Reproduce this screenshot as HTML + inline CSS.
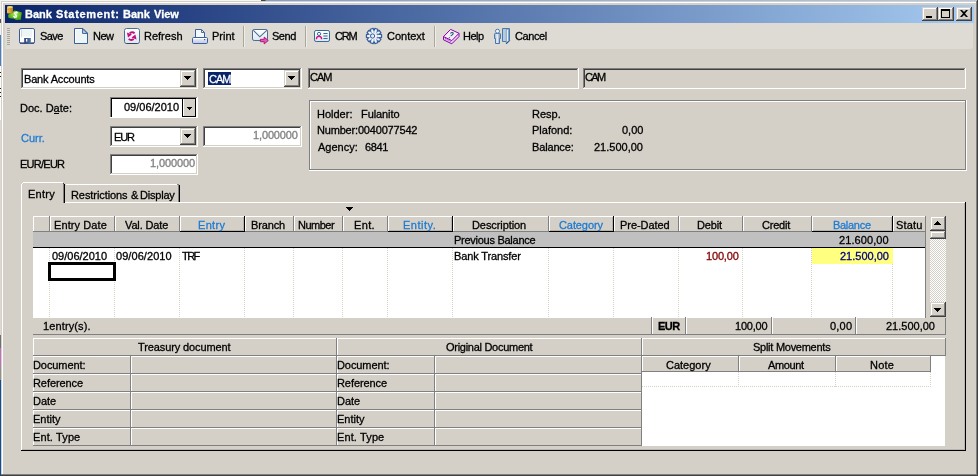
<!DOCTYPE html>
<html><head><meta charset="utf-8"><title>Bank Statement: Bank View</title>
<style>
html,body{margin:0;padding:0}
body{width:978px;height:476px;overflow:hidden;background:#D4D0C8;position:relative;font-family:"Liberation Sans",sans-serif;font-size:11px}
body>div,body>svg,body>span{position:absolute}
.t{white-space:nowrap;line-height:13px;height:13px;font-size:11px;will-change:transform;-webkit-text-stroke:0.3px currentColor}
</style></head>
<body>
<div style="left:0px;top:0px;width:978px;height:1px;background:linear-gradient(90deg,#F6F6F6 0,#F6F6F6 261px,#444 261px,#444 265px,#7FA0D2 266px,#B4C8E2 978px)"></div>
<div style="left:0px;top:0px;width:1px;height:476px;background:#DDD9D2"></div>
<div style="left:0px;top:0px;width:1px;height:19px;background:#F2F2F2"></div>
<div style="left:0px;top:19px;width:1px;height:4px;background:#555"></div>
<div style="left:0px;top:23px;width:1px;height:12px;background:#F0F0F0"></div>
<div style="left:0px;top:35px;width:1px;height:31px;background:#3F7FD0"></div>
<div style="left:0px;top:66px;width:1px;height:54px;background:#FBFBFB"></div>
<div style="left:0px;top:335px;width:1px;height:13px;background:#707070"></div>
<div style="left:0px;top:348px;width:1px;height:18px;background:#C070C0"></div>
<div style="left:0px;top:366px;width:1px;height:14px;background:#909090"></div>
<div style="left:0px;top:380px;width:1px;height:96px;background:#0A4FA0"></div>
<div style="left:0px;top:72px;width:1px;height:1px;background:#222"></div>
<div style="left:0px;top:76px;width:1px;height:1px;background:#222"></div>
<div style="left:0px;top:88px;width:1px;height:1px;background:#222"></div>
<div style="left:0px;top:92px;width:1px;height:1px;background:#222"></div>
<div style="left:0px;top:96px;width:1px;height:1px;background:#222"></div>
<div style="left:1px;top:1px;width:977px;height:1px;background:#D4D0C8"></div>
<div style="left:1px;top:1px;width:1px;height:475px;background:#D4D0C8"></div>
<div style="left:2px;top:2px;width:975px;height:1px;background:#FFFFFF"></div>
<div style="left:2px;top:2px;width:1px;height:473px;background:#FFFFFF"></div>
<div style="left:976px;top:1px;width:1px;height:475px;background:#808080"></div>
<div style="left:977px;top:0px;width:1px;height:476px;background:#404040"></div>
<div style="left:1px;top:474px;width:977px;height:1px;background:#808080"></div>
<div style="left:0px;top:475px;width:978px;height:1px;background:#404040"></div>
<div style="left:977px;top:474px;width:1px;height:2px;background:#404040"></div>
<div style="left:5px;top:5px;width:969px;height:18px;background:linear-gradient(90deg,#0A246A 0%,#A6CAF0 100%)"></div>
<span class="t" id="t0" style="left:25.12px;top:8px;color:#FFF;letter-spacing:0.000px;font-weight:bold;">Bank</span>
<span class="t" id="t1" style="left:56.00px;top:8px;color:#FFF;letter-spacing:0.676px;font-weight:bold;">Statement:</span>
<span class="t" id="t2" style="left:122.58px;top:8px;color:#FFF;letter-spacing:0.000px;font-weight:bold;">Bank</span>
<span class="t" id="t3" style="left:153.58px;top:8px;color:#FFF;letter-spacing:0.000px;font-weight:bold;">View</span>
<div style="left:922px;top:7px;width:16px;height:14px;background:#D4D0C8"></div>
<div style="left:922px;top:7px;width:15px;height:1px;background:#D4D0C8"></div>
<div style="left:922px;top:7px;width:1px;height:13px;background:#D4D0C8"></div>
<div style="left:923px;top:8px;width:13px;height:1px;background:#FFFFFF"></div>
<div style="left:923px;top:8px;width:1px;height:11px;background:#FFFFFF"></div>
<div style="left:923px;top:19px;width:14px;height:1px;background:#808080"></div>
<div style="left:936px;top:8px;width:1px;height:12px;background:#808080"></div>
<div style="left:922px;top:20px;width:16px;height:1px;background:#404040"></div>
<div style="left:937px;top:7px;width:1px;height:14px;background:#404040"></div>
<div style="left:938px;top:7px;width:16px;height:14px;background:#D4D0C8"></div>
<div style="left:938px;top:7px;width:15px;height:1px;background:#D4D0C8"></div>
<div style="left:938px;top:7px;width:1px;height:13px;background:#D4D0C8"></div>
<div style="left:939px;top:8px;width:13px;height:1px;background:#FFFFFF"></div>
<div style="left:939px;top:8px;width:1px;height:11px;background:#FFFFFF"></div>
<div style="left:939px;top:19px;width:14px;height:1px;background:#808080"></div>
<div style="left:952px;top:8px;width:1px;height:12px;background:#808080"></div>
<div style="left:938px;top:20px;width:16px;height:1px;background:#404040"></div>
<div style="left:953px;top:7px;width:1px;height:14px;background:#404040"></div>
<div style="left:956px;top:7px;width:16px;height:14px;background:#D4D0C8"></div>
<div style="left:956px;top:7px;width:15px;height:1px;background:#D4D0C8"></div>
<div style="left:956px;top:7px;width:1px;height:13px;background:#D4D0C8"></div>
<div style="left:957px;top:8px;width:13px;height:1px;background:#FFFFFF"></div>
<div style="left:957px;top:8px;width:1px;height:11px;background:#FFFFFF"></div>
<div style="left:957px;top:19px;width:14px;height:1px;background:#808080"></div>
<div style="left:970px;top:8px;width:1px;height:12px;background:#808080"></div>
<div style="left:956px;top:20px;width:16px;height:1px;background:#404040"></div>
<div style="left:971px;top:7px;width:1px;height:14px;background:#404040"></div>
<div style="left:926px;top:16px;width:6px;height:2px;background:#000"></div>
<div style="left:941px;top:9px;width:9px;height:9px;border:1px solid #000;border-top-width:2px;box-sizing:border-box"></div>
<svg style="left:960px;top:10px" width="8" height="7" viewBox="0 0 8 7"><path d="M0 0h2l2 2 2-2h2L5 3.5 8 7H6L4 5 2 7H0l3-3.5z" fill="#000"/></svg>
<div style="left:5px;top:23px;width:968px;height:26px;background:#DEDBD5;border-radius:0 0 3px 0"></div>
<div style="left:7px;top:28px;width:3px;height:1px;background:#A9A6A0"></div>
<div style="left:7px;top:30px;width:3px;height:1px;background:#A9A6A0"></div>
<div style="left:7px;top:32px;width:3px;height:1px;background:#A9A6A0"></div>
<div style="left:7px;top:34px;width:3px;height:1px;background:#A9A6A0"></div>
<div style="left:7px;top:36px;width:3px;height:1px;background:#A9A6A0"></div>
<div style="left:7px;top:38px;width:3px;height:1px;background:#A9A6A0"></div>
<div style="left:7px;top:40px;width:3px;height:1px;background:#A9A6A0"></div>
<div style="left:7px;top:42px;width:3px;height:1px;background:#A9A6A0"></div>
<div style="left:7px;top:44px;width:3px;height:1px;background:#A9A6A0"></div>
<span class="t" id="t4" style="left:39.58px;top:30px;color:#000;letter-spacing:-0.587px;">Save</span>
<span class="t" id="t5" style="left:93.20px;top:30px;color:#000;letter-spacing:-0.560px;">New</span>
<span class="t" id="t6" style="left:144.20px;top:30px;color:#000;letter-spacing:0.000px;">Refresh</span>
<span class="t" id="t7" style="left:212.00px;top:30px;color:#000;letter-spacing:0.000px;">Print</span>
<span class="t" id="t8" style="left:271.90px;top:30px;color:#000;letter-spacing:-0.480px;">Send</span>
<span class="t" id="t9" style="left:334.58px;top:30px;color:#000;letter-spacing:-1.240px;">CRM</span>
<span class="t" id="t10" style="left:386.58px;top:30px;color:#000;letter-spacing:0.000px;">Context</span>
<span class="t" id="t11" style="left:463.20px;top:30px;color:#000;letter-spacing:-0.533px;">Help</span>
<span class="t" id="t12" style="left:514.50px;top:30px;color:#000;letter-spacing:-0.400px;">Cancel</span>
<div style="left:243px;top:26px;width:1px;height:21px;background:#ACA899"></div>
<div style="left:244px;top:26px;width:1px;height:21px;background:#EFEDE8"></div>
<div style="left:305px;top:26px;width:1px;height:21px;background:#ACA899"></div>
<div style="left:306px;top:26px;width:1px;height:21px;background:#EFEDE8"></div>
<div style="left:434px;top:26px;width:1px;height:21px;background:#ACA899"></div>
<div style="left:435px;top:26px;width:1px;height:21px;background:#EFEDE8"></div>
<svg style="left:0;top:23px" width="978" height="26" viewBox="0 23 978 26">
<defs>
<linearGradient id="gw" x1="0" y1="0" x2="0" y2="1"><stop offset="0" stop-color="#FFFFFF"/><stop offset="1" stop-color="#DDE7EF"/></linearGradient>
<linearGradient id="gp" x1="0" y1="0" x2="0" y2="1"><stop offset="0" stop-color="#F2F4FB"/><stop offset="1" stop-color="#BFC8E3"/></linearGradient>
<linearGradient id="gs" x1="0" y1="0" x2="1" y2="0"><stop offset="0" stop-color="#2E4577"/><stop offset="1" stop-color="#5874A3"/></linearGradient>
<linearGradient id="gb" x1="0" y1="0" x2="1" y2="0"><stop offset="0" stop-color="#8FABCB"/><stop offset="0.45" stop-color="#EEF3F9"/><stop offset="1" stop-color="#6385AF"/></linearGradient>
</defs>
<!-- save -->
<rect x="19.5" y="28.5" width="15" height="15" rx="1.6" fill="#FFFFFF" stroke="#3B5A94"/>
<rect x="21.6" y="29.4" width="10.6" height="7.2" fill="#EDF5F5"/>
<rect x="21" y="29.2" width="0.8" height="8" fill="#BFD0E4"/>
<rect x="20" y="42.4" width="14" height="1.2" fill="#2F487A"/>
<rect x="24.2" y="38" width="6.6" height="5.6" fill="url(#gs)"/>
<rect x="26" y="39" width="1.3" height="2.6" fill="#F4F7FB"/>
<!-- new -->
<path d="M74.5 28.5H83L87.5 33V43.5H74.5Z" fill="#EDF5F5" stroke="#3D5F99"/>
<path d="M75.5 42.5V29.5H82.5" fill="none" stroke="#FFFFFF"/>
<path d="M82.6 28.9V33.4H87.2Z" fill="#C7D6E8" stroke="#3D5F99" stroke-linejoin="round"/>
<!-- refresh -->
<rect x="124.5" y="28.5" width="15" height="15" rx="2" fill="url(#gw)" stroke="#4A6D94"/>
<path d="M126.5 43.5H137.5" stroke="#2F4560" fill="none"/>
<path d="M134.6 33.4C133.2 31.8 130.8 31.9 129.8 33.4" fill="none" stroke="#C2107C" stroke-width="1.9"/>
<path d="M126.9 32.6L131.9 34.6L128 37.6Z" fill="#C2107C"/>
<path d="M128.8 38.8C130.2 40.4 132.6 40.3 133.6 38.8" fill="none" stroke="#C2107C" stroke-width="1.9"/>
<path d="M136.5 39.6L131.5 37.6L135.4 34.6Z" fill="#C2107C"/>
<!-- print -->
<path d="M195.5 37.5V29.5H201.5L204.5 32.5V37.5" fill="#F3F8FA" stroke="#3D5F99"/>
<path d="M201.5 29.8V32.5H204.3" fill="none" stroke="#3D5F99" stroke-width="0.9"/>
<rect x="192.5" y="37.5" width="15" height="6" rx="1.2" fill="url(#gp)" stroke="#3D5F99"/>
<path d="M193.5 38.5H206.5" stroke="#FFFFFF" fill="none"/>
<rect x="204" y="39" width="1.2" height="1.2" fill="#3D5F99"/>
<!-- send -->
<rect x="252.5" y="29.5" width="15" height="11" rx="1.6" fill="url(#gw)" stroke="#4A6D94"/>
<path d="M253.4 30.3L259.8 36.8L266.8 30.3" fill="none" stroke="#4A6D94" stroke-width="1.1"/>
<path d="M260.4 39.3H264.2V37.1L268.3 40.5L264.2 43.9V41.7H260.4Z" fill="#D860B0" stroke="#B4087A" stroke-width="0.9" stroke-linejoin="round"/>
<!-- crm -->
<rect x="314.5" y="30.5" width="15" height="11" rx="1.6" fill="url(#gw)" stroke="#366A9C"/>
<circle cx="319" cy="33.9" r="1.6" fill="#FFFFFF" stroke="#366A9C"/>
<path d="M316.4 39.2C316.4 37.2 317.4 36.4 319 36.4S321.6 37.2 321.6 39.2" fill="#FBE3F0" stroke="#D0107A" stroke-width="1.3"/>
<path d="M323.4 33.5H327.6M323.4 36H327.6M323.4 38.5H327.6" stroke="#366A9C" fill="none" stroke-width="1"/>
<!-- context gear -->
<polygon points="379.34,34.32 381.56,34.52 381.56,37.48 379.34,37.68 379.31,37.78 380.98,39.24 379.24,41.64 377.34,40.50 377.25,40.56 377.74,42.73 374.93,43.64 374.06,41.60 373.94,41.60 373.07,43.64 370.26,42.73 370.75,40.56 370.66,40.50 368.76,41.64 367.02,39.24 368.69,37.78 368.66,37.68 366.44,37.48 366.44,34.52 368.66,34.32 368.69,34.22 367.02,32.76 368.76,30.36 370.66,31.50 370.75,31.44 370.26,29.27 373.07,28.36 373.94,30.40 374.06,30.40 374.93,28.36 377.74,29.27 377.25,31.44 377.34,31.50 379.24,30.36 380.98,32.76 379.31,34.22" fill="#F2F6FB" stroke="#3A5F9A" stroke-width="1.25" stroke-linejoin="round"/>
<path d="M377.04 36.99L379.33 37.73M375.88 38.59L377.29 40.53M374.00 39.20L374.00 41.60M372.12 38.59L370.71 40.53M370.96 36.99L368.67 37.73M370.96 35.01L368.67 34.27M372.12 33.41L370.71 31.47M374.00 32.80L374.00 30.40M375.88 33.41L377.29 31.47M377.04 35.01L379.33 34.27" stroke="#86A3CC" stroke-width="0.9" fill="none"/>
<circle cx="372.6" cy="36" r="2.1" fill="#E6EEF6" stroke="#3A5F9A" stroke-width="1"/>
<path d="M376.6 34.2H380M376.6 37.8H380" stroke="#3A5F9A" stroke-width="1" fill="none"/>
<!-- help book -->
<path d="M443.5 36.6V39.8L451.8 43.8L459 36.6V33.3" fill="#E9D2F2" stroke="#8A00A8" stroke-linejoin="round"/>
<path d="M443.5 36.6L450.6 29.4L459 33.3L451.8 40.6Z" fill="#F6ECFA" stroke="#8A00A8" stroke-linejoin="round"/>
<path d="M445 38.5L451.8 42" stroke="#8A00A8" stroke-width="0.8" stroke-dasharray="1.5 1" fill="none"/>
<path d="M450.6 33.6C450.8 32.4 452.6 32 453.2 33.1C453.7 34.3 451.6 35 450.6 36.2" fill="none" stroke="#1F5F66" stroke-width="1.1"/>
<rect x="448.8" y="37.2" width="1.1" height="1.1" fill="#1F5F66"/>
<!-- cancel: person + door -->
<path d="M495.5 43.5V38.5H494.5V34.2Q494.5 33.4 495.5 33.4H499.5Q500.5 33.4 500.5 34.2V38.5H499.5V43.5Z" fill="url(#gb)" stroke="#4A78AA" stroke-linejoin="round"/>
<circle cx="497.5" cy="31.2" r="2" fill="#F4F8FC" stroke="#4A78AA"/>
<path d="M502.5 28.5H509.5V40.6L506.4 43.8V41.5H502.5Z" fill="#B7CBDE" stroke="#4A78AA" stroke-linejoin="round"/>
<path d="M506.3 29.5L508.6 29V40.5L506.3 42.8Z" fill="#E6EEF6" stroke="#5C86B4" stroke-width="0.7"/>
<path d="M509.8 40.4L506.2 44" stroke="#2F4F80" stroke-width="1" fill="none"/>
</svg>
<!-- title icon -->
<svg style="left:6px;top:5px" width="18" height="18" viewBox="6 5 18 18">
<defs>
<radialGradient id="gg" cx="0.5" cy="0.4" r="0.7"><stop offset="0" stop-color="#B4EE70"/><stop offset="0.5" stop-color="#63C01E"/><stop offset="1" stop-color="#3E9410"/></radialGradient>
<linearGradient id="gc" x1="0" y1="0" x2="1" y2="0"><stop offset="0" stop-color="#F0C050"/><stop offset="0.5" stop-color="#E0A838"/><stop offset="1" stop-color="#B07818"/></linearGradient>
</defs>
<path d="M8.2 14.8L12 12.6L14.6 10.4L18.6 11.4L21.8 12.4L21.2 16.6L20.8 19.8L16.2 20L13.4 18.6L11 18.4L8.2 17.4Z" fill="url(#gg)"/>
<rect x="7" y="6.8" width="6" height="6.6" rx="1" fill="url(#gc)"/>
<ellipse cx="10" cy="7" rx="3" ry="1" fill="#F6D778"/>
<path d="M7.2 9.2H12.8" stroke="#C8922C" stroke-width="0.6"/>
<g transform="rotate(18 15.6 14.6)" fill="none" stroke="#FFFFFF"><path d="M17.1 12.6C15.6 11.6 13.9 12.4 14.3 13.7C14.8 15 17.2 14.6 17.2 16.1C17.2 17.4 15.2 17.7 14 16.7" stroke-width="1.15"/><path d="M15.7 11.2V18.2" stroke-width="0.8"/></g>
</svg>

<div style="left:21px;top:68px;width:177px;height:21px;background:#FFF"></div>
<div style="left:21px;top:68px;width:177px;height:1px;background:#808080"></div>
<div style="left:21px;top:68px;width:1px;height:21px;background:#808080"></div>
<div style="left:22px;top:69px;width:175px;height:1px;background:#404040"></div>
<div style="left:22px;top:69px;width:1px;height:19px;background:#404040"></div>
<div style="left:22px;top:87px;width:175px;height:1px;background:#D4D0C8"></div>
<div style="left:196px;top:69px;width:1px;height:19px;background:#D4D0C8"></div>
<div style="left:21px;top:88px;width:177px;height:1px;background:#FFFFFF"></div>
<div style="left:197px;top:68px;width:1px;height:21px;background:#FFFFFF"></div>
<span class="t" id="t13" style="left:24.00px;top:73px;color:#000;letter-spacing:-0.167px;">Bank Accounts</span>
<div style="left:180px;top:70px;width:16px;height:17px;background:#D4D0C8"></div>
<div style="left:180px;top:70px;width:15px;height:1px;background:#D4D0C8"></div>
<div style="left:180px;top:70px;width:1px;height:16px;background:#D4D0C8"></div>
<div style="left:181px;top:71px;width:13px;height:1px;background:#FFFFFF"></div>
<div style="left:181px;top:71px;width:1px;height:14px;background:#FFFFFF"></div>
<div style="left:181px;top:85px;width:14px;height:1px;background:#808080"></div>
<div style="left:194px;top:71px;width:1px;height:15px;background:#808080"></div>
<div style="left:180px;top:86px;width:16px;height:1px;background:#404040"></div>
<div style="left:195px;top:70px;width:1px;height:17px;background:#404040"></div>
<div style="left:184px;top:76px;width:7px;height:1px;background:#000"></div>
<div style="left:185px;top:77px;width:5px;height:1px;background:#000"></div>
<div style="left:186px;top:78px;width:3px;height:1px;background:#000"></div>
<div style="left:187px;top:79px;width:1px;height:1px;background:#000"></div>
<div style="left:203px;top:68px;width:99px;height:21px;background:#FFF"></div>
<div style="left:203px;top:68px;width:99px;height:1px;background:#808080"></div>
<div style="left:203px;top:68px;width:1px;height:21px;background:#808080"></div>
<div style="left:204px;top:69px;width:97px;height:1px;background:#404040"></div>
<div style="left:204px;top:69px;width:1px;height:19px;background:#404040"></div>
<div style="left:204px;top:87px;width:97px;height:1px;background:#D4D0C8"></div>
<div style="left:300px;top:69px;width:1px;height:19px;background:#D4D0C8"></div>
<div style="left:203px;top:88px;width:99px;height:1px;background:#FFFFFF"></div>
<div style="left:301px;top:68px;width:1px;height:21px;background:#FFFFFF"></div>
<div style="left:208px;top:72px;width:23px;height:13px;background:#0A246A"></div>
<span class="t" id="t14" style="left:208.58px;top:73px;color:#FFF;letter-spacing:-1.040px;">CAM</span>
<div style="left:284px;top:70px;width:16px;height:17px;background:#D4D0C8"></div>
<div style="left:284px;top:70px;width:15px;height:1px;background:#D4D0C8"></div>
<div style="left:284px;top:70px;width:1px;height:16px;background:#D4D0C8"></div>
<div style="left:285px;top:71px;width:13px;height:1px;background:#FFFFFF"></div>
<div style="left:285px;top:71px;width:1px;height:14px;background:#FFFFFF"></div>
<div style="left:285px;top:85px;width:14px;height:1px;background:#808080"></div>
<div style="left:298px;top:71px;width:1px;height:15px;background:#808080"></div>
<div style="left:284px;top:86px;width:16px;height:1px;background:#404040"></div>
<div style="left:299px;top:70px;width:1px;height:17px;background:#404040"></div>
<div style="left:288px;top:76px;width:7px;height:1px;background:#000"></div>
<div style="left:289px;top:77px;width:5px;height:1px;background:#000"></div>
<div style="left:290px;top:78px;width:3px;height:1px;background:#000"></div>
<div style="left:291px;top:79px;width:1px;height:1px;background:#000"></div>
<div style="left:308px;top:68px;width:271px;height:21px;background:#D4D0C8"></div>
<div style="left:308px;top:68px;width:271px;height:1px;background:#808080"></div>
<div style="left:308px;top:68px;width:1px;height:21px;background:#808080"></div>
<div style="left:309px;top:69px;width:269px;height:1px;background:#404040"></div>
<div style="left:309px;top:69px;width:1px;height:19px;background:#404040"></div>
<div style="left:309px;top:87px;width:269px;height:1px;background:#D4D0C8"></div>
<div style="left:577px;top:69px;width:1px;height:19px;background:#D4D0C8"></div>
<div style="left:308px;top:88px;width:271px;height:1px;background:#FFFFFF"></div>
<div style="left:578px;top:68px;width:1px;height:21px;background:#FFFFFF"></div>
<span class="t" id="t15" style="left:310.12px;top:71px;color:#000;letter-spacing:-0.960px;">CAM</span>
<div style="left:583px;top:68px;width:383px;height:21px;background:#D4D0C8"></div>
<div style="left:583px;top:68px;width:383px;height:1px;background:#808080"></div>
<div style="left:583px;top:68px;width:1px;height:21px;background:#808080"></div>
<div style="left:584px;top:69px;width:381px;height:1px;background:#404040"></div>
<div style="left:584px;top:69px;width:1px;height:19px;background:#404040"></div>
<div style="left:584px;top:87px;width:381px;height:1px;background:#D4D0C8"></div>
<div style="left:964px;top:69px;width:1px;height:19px;background:#D4D0C8"></div>
<div style="left:583px;top:88px;width:383px;height:1px;background:#FFFFFF"></div>
<div style="left:965px;top:68px;width:1px;height:21px;background:#FFFFFF"></div>
<span class="t" id="t16" style="left:584.70px;top:71px;color:#000;letter-spacing:-1.600px;">CAM</span>
<span class="t" id="t17" style="left:19.70px;top:102px;color:#000;letter-spacing:0.000px;">Doc. Date:</span>
<div style="left:54px;top:113px;width:5px;height:1px;background:#000"></div>
<div style="left:110px;top:97px;width:88px;height:21px;background:#FFF"></div>
<div style="left:110px;top:97px;width:88px;height:1px;background:#808080"></div>
<div style="left:110px;top:97px;width:1px;height:21px;background:#808080"></div>
<div style="left:111px;top:98px;width:86px;height:1px;background:#404040"></div>
<div style="left:111px;top:98px;width:1px;height:19px;background:#404040"></div>
<div style="left:111px;top:116px;width:86px;height:1px;background:#D4D0C8"></div>
<div style="left:196px;top:98px;width:1px;height:19px;background:#D4D0C8"></div>
<div style="left:110px;top:117px;width:88px;height:1px;background:#FFFFFF"></div>
<div style="left:197px;top:97px;width:1px;height:21px;background:#FFFFFF"></div>
<div style="left:196px;top:98px;width:1px;height:19px;background:#FFF"></div>
<div style="left:111px;top:116px;width:86px;height:1px;background:#FFF"></div>
<div style="left:111px;top:98px;width:85px;height:1px;background:#000"></div>
<div style="left:111px;top:98px;width:1px;height:19px;background:#000"></div>
<span class="t" id="t18" style="left:123.58px;top:101px;color:#000;letter-spacing:0.000px;">09/06/2010</span>
<div style="left:182px;top:98px;width:14px;height:19px;background:#D4D0C8;border:1px solid #000;box-sizing:border-box"></div>
<div style="left:183px;top:99px;width:1px;height:17px;background:#FFF"></div>
<div style="left:187px;top:107px;width:5px;height:1px;background:#000"></div>
<div style="left:188px;top:108px;width:3px;height:1px;background:#000"></div>
<div style="left:189px;top:109px;width:1px;height:1px;background:#000"></div>
<span class="t" id="t19" style="left:20.76px;top:132px;color:#1E7BD2;letter-spacing:0.000px;">Curr.</span>
<div style="left:110px;top:126px;width:88px;height:21px;background:#FFF"></div>
<div style="left:110px;top:126px;width:88px;height:1px;background:#808080"></div>
<div style="left:110px;top:126px;width:1px;height:21px;background:#808080"></div>
<div style="left:111px;top:127px;width:86px;height:1px;background:#404040"></div>
<div style="left:111px;top:127px;width:1px;height:19px;background:#404040"></div>
<div style="left:111px;top:145px;width:86px;height:1px;background:#D4D0C8"></div>
<div style="left:196px;top:127px;width:1px;height:19px;background:#D4D0C8"></div>
<div style="left:110px;top:146px;width:88px;height:1px;background:#FFFFFF"></div>
<div style="left:197px;top:126px;width:1px;height:21px;background:#FFFFFF"></div>
<span class="t" id="t20" style="left:114.10px;top:131px;color:#000;letter-spacing:-1.080px;">EUR</span>
<div style="left:180px;top:128px;width:16px;height:17px;background:#D4D0C8"></div>
<div style="left:180px;top:128px;width:15px;height:1px;background:#D4D0C8"></div>
<div style="left:180px;top:128px;width:1px;height:16px;background:#D4D0C8"></div>
<div style="left:181px;top:129px;width:13px;height:1px;background:#FFFFFF"></div>
<div style="left:181px;top:129px;width:1px;height:14px;background:#FFFFFF"></div>
<div style="left:181px;top:143px;width:14px;height:1px;background:#808080"></div>
<div style="left:194px;top:129px;width:1px;height:15px;background:#808080"></div>
<div style="left:180px;top:144px;width:16px;height:1px;background:#404040"></div>
<div style="left:195px;top:128px;width:1px;height:17px;background:#404040"></div>
<div style="left:184px;top:134px;width:7px;height:1px;background:#000"></div>
<div style="left:185px;top:135px;width:5px;height:1px;background:#000"></div>
<div style="left:186px;top:136px;width:3px;height:1px;background:#000"></div>
<div style="left:187px;top:137px;width:1px;height:1px;background:#000"></div>
<div style="left:203px;top:126px;width:99px;height:21px;background:#FFF"></div>
<div style="left:203px;top:126px;width:99px;height:1px;background:#808080"></div>
<div style="left:203px;top:126px;width:1px;height:21px;background:#808080"></div>
<div style="left:204px;top:127px;width:97px;height:1px;background:#404040"></div>
<div style="left:204px;top:127px;width:1px;height:19px;background:#404040"></div>
<div style="left:204px;top:145px;width:97px;height:1px;background:#D4D0C8"></div>
<div style="left:300px;top:127px;width:1px;height:19px;background:#D4D0C8"></div>
<div style="left:203px;top:146px;width:99px;height:1px;background:#FFFFFF"></div>
<div style="left:301px;top:126px;width:1px;height:21px;background:#FFFFFF"></div>
<span class="t" id="t21" style="left:253.00px;top:129px;color:#808080;letter-spacing:-0.137px;">1,000000</span>
<span class="t" id="t22" style="left:20.20px;top:158px;color:#000;letter-spacing:-0.747px;">EUR/EUR</span>
<div style="left:110px;top:154px;width:88px;height:21px;background:#FFF"></div>
<div style="left:110px;top:154px;width:88px;height:1px;background:#808080"></div>
<div style="left:110px;top:154px;width:1px;height:21px;background:#808080"></div>
<div style="left:111px;top:155px;width:86px;height:1px;background:#404040"></div>
<div style="left:111px;top:155px;width:1px;height:19px;background:#404040"></div>
<div style="left:111px;top:173px;width:86px;height:1px;background:#D4D0C8"></div>
<div style="left:196px;top:155px;width:1px;height:19px;background:#D4D0C8"></div>
<div style="left:110px;top:174px;width:88px;height:1px;background:#FFFFFF"></div>
<div style="left:197px;top:154px;width:1px;height:21px;background:#FFFFFF"></div>
<span class="t" id="t23" style="left:149.58px;top:157px;color:#808080;letter-spacing:-0.126px;">1,000000</span>
<div style="left:309px;top:100px;width:657px;height:1px;background:#808080"></div>
<div style="left:309px;top:100px;width:1px;height:70px;background:#808080"></div>
<div style="left:310px;top:101px;width:655px;height:1px;background:#FFF"></div>
<div style="left:310px;top:101px;width:1px;height:68px;background:#FFF"></div>
<div style="left:310px;top:169px;width:656px;height:1px;background:#808080"></div>
<div style="left:965px;top:101px;width:1px;height:69px;background:#808080"></div>
<div style="left:309px;top:170px;width:658px;height:1px;background:#FFF"></div>
<div style="left:966px;top:100px;width:1px;height:71px;background:#FFF"></div>
<span class="t" id="t24" style="left:317.10px;top:108px;color:#000;letter-spacing:0.000px;">Holder:</span>
<span class="t" id="t25" style="left:361.30px;top:108px;color:#000;letter-spacing:-0.080px;">Fulanito</span>
<span class="t" id="t26" style="left:317.10px;top:124px;color:#000;letter-spacing:-0.180px;">Number:0040077542</span>
<span class="t" id="t27" style="left:317.58px;top:141px;color:#000;letter-spacing:0.000px;">Agency:</span>
<span class="t" id="t28" style="left:365.00px;top:141px;color:#000;letter-spacing:-0.347px;">6841</span>
<span class="t" id="t29" style="left:532.10px;top:108px;color:#000;letter-spacing:0.000px;">Resp.</span>
<span class="t" id="t30" style="left:532.10px;top:124px;color:#000;letter-spacing:0.000px;">Plafond:</span>
<span class="t" id="t31" style="left:622.12px;top:124px;color:#000;letter-spacing:0.000px;">0,00</span>
<span class="t" id="t32" style="left:532.10px;top:141px;color:#000;letter-spacing:-0.160px;">Balance:</span>
<span class="t" id="t33" style="left:593.76px;top:141px;color:#000;letter-spacing:0.000px;">21.500,00</span>
<div style="left:21px;top:202px;width:944px;height:1px;background:#FFF"></div>
<div style="left:21px;top:202px;width:1px;height:248px;background:#FFF"></div>
<div style="left:965px;top:202px;width:1px;height:249px;background:#000"></div>
<div style="left:21px;top:450px;width:945px;height:1px;background:#000"></div>
<div style="left:964px;top:203px;width:1px;height:247px;background:#B9B6AF"></div>
<div style="left:22px;top:449px;width:943px;height:1px;background:#B9B6AF"></div>
<div style="left:66px;top:184px;width:112px;height:1px;background:#FFF"></div>
<div style="left:178px;top:185px;width:1px;height:17px;background:#808080"></div>
<div style="left:179px;top:185px;width:1px;height:17px;background:#000"></div>
<div style="left:177px;top:184px;width:2px;height:1px;background:#808080"></div>
<span class="t" id="t34" style="left:71.30px;top:189px;color:#000;letter-spacing:-0.080px;">Restrictions</span>
<span class="t" id="t35" style="left:130.58px;top:189px;color:#000;letter-spacing:0.000px;">&amp;</span>
<span class="t" id="t36" style="left:140.10px;top:189px;color:#000;letter-spacing:-0.200px;">Display</span>
<div style="left:22px;top:183px;width:42px;height:20px;background:#D4D0C8"></div>
<div style="left:23px;top:182px;width:40px;height:1px;background:#FFF"></div>
<div style="left:21px;top:184px;width:1px;height:19px;background:#FFF"></div>
<div style="left:22px;top:183px;width:1px;height:1px;background:#FFF"></div>
<div style="left:63px;top:184px;width:1px;height:19px;background:#808080"></div>
<div style="left:64px;top:184px;width:1px;height:19px;background:#000"></div>
<div style="left:63px;top:183px;width:1px;height:1px;background:#404040"></div>
<span class="t" id="t37" style="left:28.42px;top:188px;color:#000;letter-spacing:0.240px;">Entry</span>
<div style="left:346px;top:207px;width:7px;height:1px;background:#000"></div>
<div style="left:347px;top:208px;width:5px;height:1px;background:#000"></div>
<div style="left:348px;top:209px;width:3px;height:1px;background:#000"></div>
<div style="left:349px;top:210px;width:1px;height:1px;background:#000"></div>
<div style="left:33px;top:216px;width:893px;height:102px;background:#FFF"></div>
<div style="left:33px;top:216px;width:17px;height:16px;background:#D4D0C8"></div>
<div style="left:33px;top:216px;width:16px;height:1px;background:#FFF"></div>
<div style="left:33px;top:216px;width:1px;height:15px;background:#FFF"></div>
<div style="left:49px;top:216px;width:1px;height:15px;background:#808080"></div>
<div style="left:33px;top:231px;width:17px;height:1px;background:#808080"></div>
<div style="left:50px;top:216px;width:65px;height:16px;background:#D4D0C8"></div>
<div style="left:50px;top:216px;width:64px;height:1px;background:#FFF"></div>
<div style="left:50px;top:216px;width:1px;height:15px;background:#FFF"></div>
<div style="left:114px;top:216px;width:1px;height:15px;background:#808080"></div>
<div style="left:50px;top:231px;width:65px;height:1px;background:#808080"></div>
<span class="t" id="t38" style="left:53.88px;top:219px;color:#000;letter-spacing:0.098px;">Entry Date</span>
<div style="left:115px;top:216px;width:65px;height:16px;background:#D4D0C8"></div>
<div style="left:115px;top:216px;width:64px;height:1px;background:#FFF"></div>
<div style="left:115px;top:216px;width:1px;height:15px;background:#FFF"></div>
<div style="left:179px;top:216px;width:1px;height:15px;background:#808080"></div>
<div style="left:115px;top:231px;width:65px;height:1px;background:#808080"></div>
<span class="t" id="t39" style="left:124.94px;top:219px;color:#000;letter-spacing:-0.140px;">Val. Date</span>
<div style="left:180px;top:216px;width:65px;height:16px;background:#D4D0C8"></div>
<div style="left:180px;top:216px;width:64px;height:1px;background:#FFF"></div>
<div style="left:180px;top:216px;width:1px;height:15px;background:#FFF"></div>
<div style="left:244px;top:216px;width:1px;height:16px;background:#000"></div>
<div style="left:180px;top:231px;width:65px;height:1px;background:#000"></div>
<div style="left:243px;top:217px;width:1px;height:14px;background:#B5B2AB"></div>
<div style="left:181px;top:230px;width:63px;height:1px;background:#B5B2AB"></div>
<span class="t" id="t40" style="left:198.00px;top:219px;color:#1E7BD2;letter-spacing:0.320px;">Entry</span>
<div style="left:245px;top:216px;width:49px;height:16px;background:#D4D0C8"></div>
<div style="left:245px;top:216px;width:48px;height:1px;background:#FFF"></div>
<div style="left:245px;top:216px;width:1px;height:15px;background:#FFF"></div>
<div style="left:293px;top:216px;width:1px;height:15px;background:#808080"></div>
<div style="left:245px;top:231px;width:49px;height:1px;background:#808080"></div>
<span class="t" id="t41" style="left:251.00px;top:219px;color:#000;letter-spacing:-0.128px;">Branch</span>
<div style="left:294px;top:216px;width:49px;height:16px;background:#D4D0C8"></div>
<div style="left:294px;top:216px;width:48px;height:1px;background:#FFF"></div>
<div style="left:294px;top:216px;width:1px;height:15px;background:#FFF"></div>
<div style="left:342px;top:216px;width:1px;height:15px;background:#808080"></div>
<div style="left:294px;top:231px;width:49px;height:1px;background:#808080"></div>
<span class="t" id="t42" style="left:298.30px;top:219px;color:#000;letter-spacing:-0.512px;">Number</span>
<div style="left:343px;top:216px;width:45px;height:16px;background:#D4D0C8"></div>
<div style="left:343px;top:216px;width:44px;height:1px;background:#FFF"></div>
<div style="left:343px;top:216px;width:1px;height:15px;background:#FFF"></div>
<div style="left:387px;top:216px;width:1px;height:15px;background:#808080"></div>
<div style="left:343px;top:231px;width:45px;height:1px;background:#808080"></div>
<span class="t" id="t43" style="left:354.00px;top:219px;color:#000;letter-spacing:0.347px;">Ent.</span>
<div style="left:388px;top:216px;width:65px;height:16px;background:#D4D0C8"></div>
<div style="left:388px;top:216px;width:64px;height:1px;background:#FFF"></div>
<div style="left:388px;top:216px;width:1px;height:15px;background:#FFF"></div>
<div style="left:452px;top:216px;width:1px;height:16px;background:#000"></div>
<div style="left:388px;top:231px;width:65px;height:1px;background:#000"></div>
<div style="left:451px;top:217px;width:1px;height:14px;background:#B5B2AB"></div>
<div style="left:389px;top:230px;width:63px;height:1px;background:#B5B2AB"></div>
<span class="t" id="t44" style="left:403.10px;top:219px;color:#1E7BD2;letter-spacing:0.507px;">Entity.</span>
<div style="left:453px;top:216px;width:96px;height:16px;background:#D4D0C8"></div>
<div style="left:453px;top:216px;width:95px;height:1px;background:#FFF"></div>
<div style="left:453px;top:216px;width:1px;height:15px;background:#FFF"></div>
<div style="left:548px;top:216px;width:1px;height:15px;background:#808080"></div>
<div style="left:453px;top:231px;width:96px;height:1px;background:#808080"></div>
<span class="t" id="t45" style="left:471.88px;top:219px;color:#000;letter-spacing:-0.080px;">Description</span>
<div style="left:549px;top:216px;width:65px;height:16px;background:#D4D0C8"></div>
<div style="left:549px;top:216px;width:64px;height:1px;background:#FFF"></div>
<div style="left:549px;top:216px;width:1px;height:15px;background:#FFF"></div>
<div style="left:613px;top:216px;width:1px;height:16px;background:#000"></div>
<div style="left:549px;top:231px;width:65px;height:1px;background:#000"></div>
<div style="left:612px;top:217px;width:1px;height:14px;background:#B5B2AB"></div>
<div style="left:550px;top:230px;width:63px;height:1px;background:#B5B2AB"></div>
<span class="t" id="t46" style="left:558.76px;top:219px;color:#1E7BD2;letter-spacing:-0.091px;">Category</span>
<div style="left:614px;top:216px;width:65px;height:16px;background:#D4D0C8"></div>
<div style="left:614px;top:216px;width:64px;height:1px;background:#FFF"></div>
<div style="left:614px;top:216px;width:1px;height:15px;background:#FFF"></div>
<div style="left:678px;top:216px;width:1px;height:15px;background:#808080"></div>
<div style="left:614px;top:231px;width:65px;height:1px;background:#808080"></div>
<span class="t" id="t47" style="left:620.10px;top:219px;color:#000;letter-spacing:-0.060px;">Pre-Dated</span>
<div style="left:679px;top:216px;width:64px;height:16px;background:#D4D0C8"></div>
<div style="left:679px;top:216px;width:63px;height:1px;background:#FFF"></div>
<div style="left:679px;top:216px;width:1px;height:15px;background:#FFF"></div>
<div style="left:742px;top:216px;width:1px;height:15px;background:#808080"></div>
<div style="left:679px;top:231px;width:64px;height:1px;background:#808080"></div>
<span class="t" id="t48" style="left:697.10px;top:219px;color:#000;letter-spacing:-0.160px;">Debit</span>
<div style="left:743px;top:216px;width:69px;height:16px;background:#D4D0C8"></div>
<div style="left:743px;top:216px;width:68px;height:1px;background:#FFF"></div>
<div style="left:743px;top:216px;width:1px;height:15px;background:#FFF"></div>
<div style="left:811px;top:216px;width:1px;height:15px;background:#808080"></div>
<div style="left:743px;top:231px;width:69px;height:1px;background:#808080"></div>
<span class="t" id="t49" style="left:761.58px;top:219px;color:#000;letter-spacing:-0.208px;">Credit</span>
<div style="left:812px;top:216px;width:81px;height:16px;background:#D4D0C8"></div>
<div style="left:812px;top:216px;width:80px;height:1px;background:#FFF"></div>
<div style="left:812px;top:216px;width:1px;height:15px;background:#FFF"></div>
<div style="left:892px;top:216px;width:1px;height:16px;background:#000"></div>
<div style="left:812px;top:231px;width:81px;height:1px;background:#000"></div>
<div style="left:891px;top:217px;width:1px;height:14px;background:#B5B2AB"></div>
<div style="left:813px;top:230px;width:79px;height:1px;background:#B5B2AB"></div>
<span class="t" id="t50" style="left:833.10px;top:219px;color:#1E7BD2;letter-spacing:-0.293px;">Balance</span>
<div style="left:893px;top:216px;width:33px;height:16px;background:#D4D0C8"></div>
<div style="left:893px;top:216px;width:32px;height:1px;background:#FFF"></div>
<div style="left:893px;top:216px;width:1px;height:15px;background:#FFF"></div>
<div style="left:925px;top:216px;width:1px;height:15px;background:#808080"></div>
<div style="left:893px;top:231px;width:33px;height:1px;background:#808080"></div>
<span class="t" id="t51" style="left:895.58px;top:219px;color:#000;letter-spacing:0.200px;">Statu</span>
<div style="left:33px;top:232px;width:893px;height:15px;background:#C0C0C0"></div>
<div style="left:33px;top:247px;width:893px;height:1px;background:#000"></div>
<span class="t" id="t52" style="left:454.10px;top:234px;color:#000;letter-spacing:-0.267px;">Previous Balance</span>
<span class="t" id="t53" style="left:838.80px;top:234px;color:#000;letter-spacing:0.090px;">21.600,00</span>
<div style="left:49px;top:248px;width:1px;height:70px;background:repeating-linear-gradient(#D6D2C4 0,#D6D2C4 1px,#FFF 1px,#FFF 2px)"></div>
<div style="left:114px;top:248px;width:1px;height:70px;background:repeating-linear-gradient(#D6D2C4 0,#D6D2C4 1px,#FFF 1px,#FFF 2px)"></div>
<div style="left:179px;top:248px;width:1px;height:70px;background:repeating-linear-gradient(#D6D2C4 0,#D6D2C4 1px,#FFF 1px,#FFF 2px)"></div>
<div style="left:244px;top:248px;width:1px;height:70px;background:repeating-linear-gradient(#D6D2C4 0,#D6D2C4 1px,#FFF 1px,#FFF 2px)"></div>
<div style="left:293px;top:248px;width:1px;height:70px;background:repeating-linear-gradient(#D6D2C4 0,#D6D2C4 1px,#FFF 1px,#FFF 2px)"></div>
<div style="left:342px;top:248px;width:1px;height:70px;background:repeating-linear-gradient(#D6D2C4 0,#D6D2C4 1px,#FFF 1px,#FFF 2px)"></div>
<div style="left:387px;top:248px;width:1px;height:70px;background:repeating-linear-gradient(#D6D2C4 0,#D6D2C4 1px,#FFF 1px,#FFF 2px)"></div>
<div style="left:452px;top:248px;width:1px;height:70px;background:repeating-linear-gradient(#D6D2C4 0,#D6D2C4 1px,#FFF 1px,#FFF 2px)"></div>
<div style="left:548px;top:248px;width:1px;height:70px;background:repeating-linear-gradient(#D6D2C4 0,#D6D2C4 1px,#FFF 1px,#FFF 2px)"></div>
<div style="left:613px;top:248px;width:1px;height:70px;background:repeating-linear-gradient(#D6D2C4 0,#D6D2C4 1px,#FFF 1px,#FFF 2px)"></div>
<div style="left:678px;top:248px;width:1px;height:70px;background:repeating-linear-gradient(#D6D2C4 0,#D6D2C4 1px,#FFF 1px,#FFF 2px)"></div>
<div style="left:742px;top:248px;width:1px;height:70px;background:repeating-linear-gradient(#D6D2C4 0,#D6D2C4 1px,#FFF 1px,#FFF 2px)"></div>
<div style="left:811px;top:248px;width:1px;height:70px;background:repeating-linear-gradient(#D6D2C4 0,#D6D2C4 1px,#FFF 1px,#FFF 2px)"></div>
<div style="left:892px;top:248px;width:1px;height:70px;background:repeating-linear-gradient(#D6D2C4 0,#D6D2C4 1px,#FFF 1px,#FFF 2px)"></div>
<div style="left:812px;top:248px;width:81px;height:16px;background:#FFFF80"></div>
<span class="t" id="t54" style="left:51.76px;top:250px;color:#000;letter-spacing:0.000px;">09/06/2010</span>
<span class="t" id="t55" style="left:115.90px;top:250px;color:#000;letter-spacing:0.062px;">09/06/2010</span>
<span class="t" id="t56" style="left:181.60px;top:250px;color:#000;letter-spacing:-1.520px;">TRF</span>
<span class="t" id="t57" style="left:454.10px;top:250px;color:#000;letter-spacing:-0.140px;">Bank Transfer</span>
<span class="t" id="t58" style="left:706.00px;top:250px;color:#800000;letter-spacing:-0.176px;">100,00</span>
<span class="t" id="t59" style="left:839.76px;top:250px;color:#000080;letter-spacing:0.000px;">21.500,00</span>
<div style="left:48px;top:262px;width:68px;height:19px;border:3px solid #000;box-sizing:border-box;background:#FFF"></div>
<div style="left:930px;top:216px;width:16px;height:101px;background:repeating-conic-gradient(#FFF 0% 25%,#D4D0C8 0% 50%) 0 0/2px 2px"></div>
<div style="left:930px;top:216px;width:16px;height:15px;background:#D4D0C8"></div>
<div style="left:930px;top:216px;width:15px;height:1px;background:#D4D0C8"></div>
<div style="left:930px;top:216px;width:1px;height:14px;background:#D4D0C8"></div>
<div style="left:931px;top:217px;width:13px;height:1px;background:#FFFFFF"></div>
<div style="left:931px;top:217px;width:1px;height:12px;background:#FFFFFF"></div>
<div style="left:931px;top:229px;width:14px;height:1px;background:#808080"></div>
<div style="left:944px;top:217px;width:1px;height:13px;background:#808080"></div>
<div style="left:930px;top:230px;width:16px;height:1px;background:#404040"></div>
<div style="left:945px;top:216px;width:1px;height:15px;background:#404040"></div>
<div style="left:937px;top:221px;width:1px;height:1px;background:#000"></div>
<div style="left:936px;top:222px;width:3px;height:1px;background:#000"></div>
<div style="left:935px;top:223px;width:5px;height:1px;background:#000"></div>
<div style="left:934px;top:224px;width:7px;height:1px;background:#000"></div>
<div style="left:930px;top:231px;width:16px;height:8px;background:#D4D0C8"></div>
<div style="left:930px;top:231px;width:15px;height:1px;background:#D4D0C8"></div>
<div style="left:930px;top:231px;width:1px;height:7px;background:#D4D0C8"></div>
<div style="left:931px;top:232px;width:13px;height:1px;background:#FFFFFF"></div>
<div style="left:931px;top:232px;width:1px;height:5px;background:#FFFFFF"></div>
<div style="left:931px;top:237px;width:14px;height:1px;background:#808080"></div>
<div style="left:944px;top:232px;width:1px;height:6px;background:#808080"></div>
<div style="left:930px;top:238px;width:16px;height:1px;background:#404040"></div>
<div style="left:945px;top:231px;width:1px;height:8px;background:#404040"></div>
<div style="left:930px;top:302px;width:16px;height:15px;background:#D4D0C8"></div>
<div style="left:930px;top:302px;width:15px;height:1px;background:#D4D0C8"></div>
<div style="left:930px;top:302px;width:1px;height:14px;background:#D4D0C8"></div>
<div style="left:931px;top:303px;width:13px;height:1px;background:#FFFFFF"></div>
<div style="left:931px;top:303px;width:1px;height:12px;background:#FFFFFF"></div>
<div style="left:931px;top:315px;width:14px;height:1px;background:#808080"></div>
<div style="left:944px;top:303px;width:1px;height:13px;background:#808080"></div>
<div style="left:930px;top:316px;width:16px;height:1px;background:#404040"></div>
<div style="left:945px;top:302px;width:1px;height:15px;background:#404040"></div>
<div style="left:934px;top:308px;width:7px;height:1px;background:#000"></div>
<div style="left:935px;top:309px;width:5px;height:1px;background:#000"></div>
<div style="left:936px;top:310px;width:3px;height:1px;background:#000"></div>
<div style="left:937px;top:311px;width:1px;height:1px;background:#000"></div>
<div style="left:925px;top:232px;width:1px;height:86px;background:#808080"></div>
<div style="left:33px;top:318px;width:913px;height:16px;background:#D4D0C8"></div>
<div style="left:33px;top:334px;width:913px;height:1px;background:#808080"></div>
<div style="left:945px;top:318px;width:1px;height:17px;background:#808080"></div>
<div style="left:651px;top:317px;width:1px;height:17px;background:#808080"></div>
<div style="left:652px;top:317px;width:1px;height:17px;background:#FFF"></div>
<div style="left:685px;top:317px;width:1px;height:17px;background:#808080"></div>
<div style="left:686px;top:317px;width:1px;height:17px;background:#FFF"></div>
<div style="left:771px;top:317px;width:1px;height:17px;background:#808080"></div>
<div style="left:772px;top:317px;width:1px;height:17px;background:#FFF"></div>
<div style="left:855px;top:317px;width:1px;height:17px;background:#808080"></div>
<div style="left:856px;top:317px;width:1px;height:17px;background:#FFF"></div>
<span class="t" id="t60" style="left:42.70px;top:320px;color:#000;letter-spacing:0.124px;">1entry(s).</span>
<span class="t" id="t61" style="left:657.76px;top:320px;color:#000;letter-spacing:-0.560px;font-weight:bold;">EUR</span>
<span class="t" id="t62" style="left:734.58px;top:320px;color:#000;letter-spacing:-0.208px;">100,00</span>
<span class="t" id="t63" style="left:829.58px;top:320px;color:#000;letter-spacing:0.213px;">0,00</span>
<span class="t" id="t64" style="left:885.76px;top:320px;color:#000;letter-spacing:0.000px;">21.500,00</span>
<div style="left:33px;top:338px;width:304px;height:18px;background:#D4D0C8"></div>
<div style="left:33px;top:338px;width:304px;height:1px;background:#FFFFFF"></div>
<div style="left:33px;top:338px;width:1px;height:18px;background:#FFFFFF"></div>
<div style="left:33px;top:355px;width:304px;height:1px;background:#808080"></div>
<div style="left:336px;top:338px;width:1px;height:18px;background:#808080"></div>
<span class="t" id="t65" style="left:137.94px;top:341px;color:#000;letter-spacing:-0.115px;">Treasury document</span>
<div style="left:337px;top:338px;width:305px;height:18px;background:#D4D0C8"></div>
<div style="left:337px;top:338px;width:305px;height:1px;background:#FFFFFF"></div>
<div style="left:337px;top:338px;width:1px;height:18px;background:#FFFFFF"></div>
<div style="left:337px;top:355px;width:305px;height:1px;background:#808080"></div>
<div style="left:641px;top:338px;width:1px;height:18px;background:#808080"></div>
<span class="t" id="t66" style="left:445.76px;top:341px;color:#000;letter-spacing:-0.280px;">Original Document</span>
<div style="left:642px;top:338px;width:304px;height:18px;background:#D4D0C8"></div>
<div style="left:642px;top:338px;width:304px;height:1px;background:#FFFFFF"></div>
<div style="left:642px;top:338px;width:1px;height:18px;background:#FFFFFF"></div>
<div style="left:642px;top:355px;width:304px;height:1px;background:#808080"></div>
<div style="left:945px;top:338px;width:1px;height:18px;background:#808080"></div>
<span class="t" id="t67" style="left:752.76px;top:341px;color:#000;letter-spacing:-0.263px;">Split Movements</span>
<div style="left:33px;top:356px;width:98px;height:18px;background:#D4D0C8"></div>
<div style="left:33px;top:356px;width:98px;height:1px;background:#FFFFFF"></div>
<div style="left:33px;top:356px;width:1px;height:18px;background:#FFFFFF"></div>
<div style="left:33px;top:373px;width:98px;height:1px;background:#808080"></div>
<div style="left:130px;top:356px;width:1px;height:18px;background:#808080"></div>
<div style="left:131px;top:356px;width:206px;height:18px;background:#D4D0C8"></div>
<div style="left:131px;top:356px;width:206px;height:1px;background:#FFFFFF"></div>
<div style="left:131px;top:356px;width:1px;height:18px;background:#FFFFFF"></div>
<div style="left:131px;top:373px;width:206px;height:1px;background:#808080"></div>
<div style="left:336px;top:356px;width:1px;height:18px;background:#808080"></div>
<div style="left:337px;top:356px;width:98px;height:18px;background:#D4D0C8"></div>
<div style="left:337px;top:356px;width:98px;height:1px;background:#FFFFFF"></div>
<div style="left:337px;top:356px;width:1px;height:18px;background:#FFFFFF"></div>
<div style="left:337px;top:373px;width:98px;height:1px;background:#808080"></div>
<div style="left:434px;top:356px;width:1px;height:18px;background:#808080"></div>
<div style="left:435px;top:356px;width:207px;height:18px;background:#D4D0C8"></div>
<div style="left:435px;top:356px;width:207px;height:1px;background:#FFFFFF"></div>
<div style="left:435px;top:356px;width:1px;height:18px;background:#FFFFFF"></div>
<div style="left:435px;top:373px;width:207px;height:1px;background:#808080"></div>
<div style="left:641px;top:356px;width:1px;height:18px;background:#808080"></div>
<span class="t" id="t68" style="left:32.70px;top:359px;color:#000;letter-spacing:-0.080px;">Document:</span>
<span class="t" id="t69" style="left:336.70px;top:359px;color:#000;letter-spacing:-0.080px;">Document:</span>
<div style="left:33px;top:374px;width:98px;height:18px;background:#D4D0C8"></div>
<div style="left:33px;top:374px;width:98px;height:1px;background:#FFFFFF"></div>
<div style="left:33px;top:374px;width:1px;height:18px;background:#FFFFFF"></div>
<div style="left:33px;top:391px;width:98px;height:1px;background:#808080"></div>
<div style="left:130px;top:374px;width:1px;height:18px;background:#808080"></div>
<div style="left:131px;top:374px;width:206px;height:18px;background:#D4D0C8"></div>
<div style="left:131px;top:374px;width:206px;height:1px;background:#FFFFFF"></div>
<div style="left:131px;top:374px;width:1px;height:18px;background:#FFFFFF"></div>
<div style="left:131px;top:391px;width:206px;height:1px;background:#808080"></div>
<div style="left:336px;top:374px;width:1px;height:18px;background:#808080"></div>
<div style="left:337px;top:374px;width:98px;height:18px;background:#D4D0C8"></div>
<div style="left:337px;top:374px;width:98px;height:1px;background:#FFFFFF"></div>
<div style="left:337px;top:374px;width:1px;height:18px;background:#FFFFFF"></div>
<div style="left:337px;top:391px;width:98px;height:1px;background:#808080"></div>
<div style="left:434px;top:374px;width:1px;height:18px;background:#808080"></div>
<div style="left:435px;top:374px;width:207px;height:18px;background:#D4D0C8"></div>
<div style="left:435px;top:374px;width:207px;height:1px;background:#FFFFFF"></div>
<div style="left:435px;top:374px;width:1px;height:18px;background:#FFFFFF"></div>
<div style="left:435px;top:391px;width:207px;height:1px;background:#808080"></div>
<div style="left:641px;top:374px;width:1px;height:18px;background:#808080"></div>
<span class="t" id="t70" style="left:32.70px;top:377px;color:#000;letter-spacing:-0.080px;">Reference</span>
<span class="t" id="t71" style="left:336.70px;top:377px;color:#000;letter-spacing:-0.080px;">Reference</span>
<div style="left:33px;top:392px;width:98px;height:18px;background:#D4D0C8"></div>
<div style="left:33px;top:392px;width:98px;height:1px;background:#FFFFFF"></div>
<div style="left:33px;top:392px;width:1px;height:18px;background:#FFFFFF"></div>
<div style="left:33px;top:409px;width:98px;height:1px;background:#808080"></div>
<div style="left:130px;top:392px;width:1px;height:18px;background:#808080"></div>
<div style="left:131px;top:392px;width:206px;height:18px;background:#D4D0C8"></div>
<div style="left:131px;top:392px;width:206px;height:1px;background:#FFFFFF"></div>
<div style="left:131px;top:392px;width:1px;height:18px;background:#FFFFFF"></div>
<div style="left:131px;top:409px;width:206px;height:1px;background:#808080"></div>
<div style="left:336px;top:392px;width:1px;height:18px;background:#808080"></div>
<div style="left:337px;top:392px;width:98px;height:18px;background:#D4D0C8"></div>
<div style="left:337px;top:392px;width:98px;height:1px;background:#FFFFFF"></div>
<div style="left:337px;top:392px;width:1px;height:18px;background:#FFFFFF"></div>
<div style="left:337px;top:409px;width:98px;height:1px;background:#808080"></div>
<div style="left:434px;top:392px;width:1px;height:18px;background:#808080"></div>
<div style="left:435px;top:392px;width:207px;height:18px;background:#D4D0C8"></div>
<div style="left:435px;top:392px;width:207px;height:1px;background:#FFFFFF"></div>
<div style="left:435px;top:392px;width:1px;height:18px;background:#FFFFFF"></div>
<div style="left:435px;top:409px;width:207px;height:1px;background:#808080"></div>
<div style="left:641px;top:392px;width:1px;height:18px;background:#808080"></div>
<span class="t" id="t72" style="left:32.70px;top:395px;color:#000;letter-spacing:0.000px;">Date</span>
<span class="t" id="t73" style="left:336.70px;top:395px;color:#000;letter-spacing:0.000px;">Date</span>
<div style="left:33px;top:410px;width:98px;height:18px;background:#D4D0C8"></div>
<div style="left:33px;top:410px;width:98px;height:1px;background:#FFFFFF"></div>
<div style="left:33px;top:410px;width:1px;height:18px;background:#FFFFFF"></div>
<div style="left:33px;top:427px;width:98px;height:1px;background:#808080"></div>
<div style="left:130px;top:410px;width:1px;height:18px;background:#808080"></div>
<div style="left:131px;top:410px;width:206px;height:18px;background:#D4D0C8"></div>
<div style="left:131px;top:410px;width:206px;height:1px;background:#FFFFFF"></div>
<div style="left:131px;top:410px;width:1px;height:18px;background:#FFFFFF"></div>
<div style="left:131px;top:427px;width:206px;height:1px;background:#808080"></div>
<div style="left:336px;top:410px;width:1px;height:18px;background:#808080"></div>
<div style="left:337px;top:410px;width:98px;height:18px;background:#D4D0C8"></div>
<div style="left:337px;top:410px;width:98px;height:1px;background:#FFFFFF"></div>
<div style="left:337px;top:410px;width:1px;height:18px;background:#FFFFFF"></div>
<div style="left:337px;top:427px;width:98px;height:1px;background:#808080"></div>
<div style="left:434px;top:410px;width:1px;height:18px;background:#808080"></div>
<div style="left:435px;top:410px;width:207px;height:18px;background:#D4D0C8"></div>
<div style="left:435px;top:410px;width:207px;height:1px;background:#FFFFFF"></div>
<div style="left:435px;top:410px;width:1px;height:18px;background:#FFFFFF"></div>
<div style="left:435px;top:427px;width:207px;height:1px;background:#808080"></div>
<div style="left:641px;top:410px;width:1px;height:18px;background:#808080"></div>
<span class="t" id="t74" style="left:32.70px;top:413px;color:#000;letter-spacing:0.000px;">Entity</span>
<span class="t" id="t75" style="left:336.70px;top:413px;color:#000;letter-spacing:0.000px;">Entity</span>
<div style="left:33px;top:428px;width:98px;height:18px;background:#D4D0C8"></div>
<div style="left:33px;top:428px;width:98px;height:1px;background:#FFFFFF"></div>
<div style="left:33px;top:428px;width:1px;height:18px;background:#FFFFFF"></div>
<div style="left:33px;top:445px;width:98px;height:1px;background:#808080"></div>
<div style="left:130px;top:428px;width:1px;height:18px;background:#808080"></div>
<div style="left:131px;top:428px;width:206px;height:18px;background:#D4D0C8"></div>
<div style="left:131px;top:428px;width:206px;height:1px;background:#FFFFFF"></div>
<div style="left:131px;top:428px;width:1px;height:18px;background:#FFFFFF"></div>
<div style="left:131px;top:445px;width:206px;height:1px;background:#808080"></div>
<div style="left:336px;top:428px;width:1px;height:18px;background:#808080"></div>
<div style="left:337px;top:428px;width:98px;height:18px;background:#D4D0C8"></div>
<div style="left:337px;top:428px;width:98px;height:1px;background:#FFFFFF"></div>
<div style="left:337px;top:428px;width:1px;height:18px;background:#FFFFFF"></div>
<div style="left:337px;top:445px;width:98px;height:1px;background:#808080"></div>
<div style="left:434px;top:428px;width:1px;height:18px;background:#808080"></div>
<div style="left:435px;top:428px;width:207px;height:18px;background:#D4D0C8"></div>
<div style="left:435px;top:428px;width:207px;height:1px;background:#FFFFFF"></div>
<div style="left:435px;top:428px;width:1px;height:18px;background:#FFFFFF"></div>
<div style="left:435px;top:445px;width:207px;height:1px;background:#808080"></div>
<div style="left:641px;top:428px;width:1px;height:18px;background:#808080"></div>
<span class="t" id="t76" style="left:32.70px;top:431px;color:#000;letter-spacing:0.120px;">Ent. Type</span>
<span class="t" id="t77" style="left:336.70px;top:431px;color:#000;letter-spacing:0.120px;">Ent. Type</span>
<div style="left:642px;top:356px;width:303px;height:90px;background:#FFF"></div>
<div style="left:642px;top:356px;width:97px;height:16px;background:#D4D0C8"></div>
<div style="left:642px;top:356px;width:97px;height:1px;background:#FFFFFF"></div>
<div style="left:642px;top:356px;width:1px;height:16px;background:#FFFFFF"></div>
<div style="left:642px;top:371px;width:97px;height:1px;background:#808080"></div>
<div style="left:738px;top:356px;width:1px;height:16px;background:#808080"></div>
<span class="t" id="t78" style="left:665.60px;top:359px;color:#000;letter-spacing:0.000px;">Category</span>
<div style="left:739px;top:356px;width:97px;height:16px;background:#D4D0C8"></div>
<div style="left:739px;top:356px;width:97px;height:1px;background:#FFFFFF"></div>
<div style="left:739px;top:356px;width:1px;height:16px;background:#FFFFFF"></div>
<div style="left:739px;top:371px;width:97px;height:1px;background:#808080"></div>
<div style="left:835px;top:356px;width:1px;height:16px;background:#808080"></div>
<span class="t" id="t79" style="left:768.12px;top:359px;color:#000;letter-spacing:-0.352px;">Amount</span>
<div style="left:836px;top:356px;width:95px;height:16px;background:#D4D0C8"></div>
<div style="left:836px;top:356px;width:95px;height:1px;background:#FFFFFF"></div>
<div style="left:836px;top:356px;width:1px;height:16px;background:#FFFFFF"></div>
<div style="left:836px;top:371px;width:95px;height:1px;background:#808080"></div>
<div style="left:930px;top:356px;width:1px;height:16px;background:#808080"></div>
<span class="t" id="t80" style="left:870.00px;top:359px;color:#000;letter-spacing:0.187px;">Note</span>
<div style="left:642px;top:386px;width:289px;height:1px;background:repeating-linear-gradient(90deg,#D6D2C4 0,#D6D2C4 1px,#FFF 1px,#FFF 2px)"></div>
<div style="left:738px;top:372px;width:1px;height:15px;background:repeating-linear-gradient(#D6D2C4 0,#D6D2C4 1px,#FFF 1px,#FFF 2px)"></div>
<div style="left:835px;top:372px;width:1px;height:15px;background:repeating-linear-gradient(#D6D2C4 0,#D6D2C4 1px,#FFF 1px,#FFF 2px)"></div>
<div style="left:930px;top:372px;width:1px;height:15px;background:repeating-linear-gradient(#D6D2C4 0,#D6D2C4 1px,#FFF 1px,#FFF 2px)"></div>
</body></html>
